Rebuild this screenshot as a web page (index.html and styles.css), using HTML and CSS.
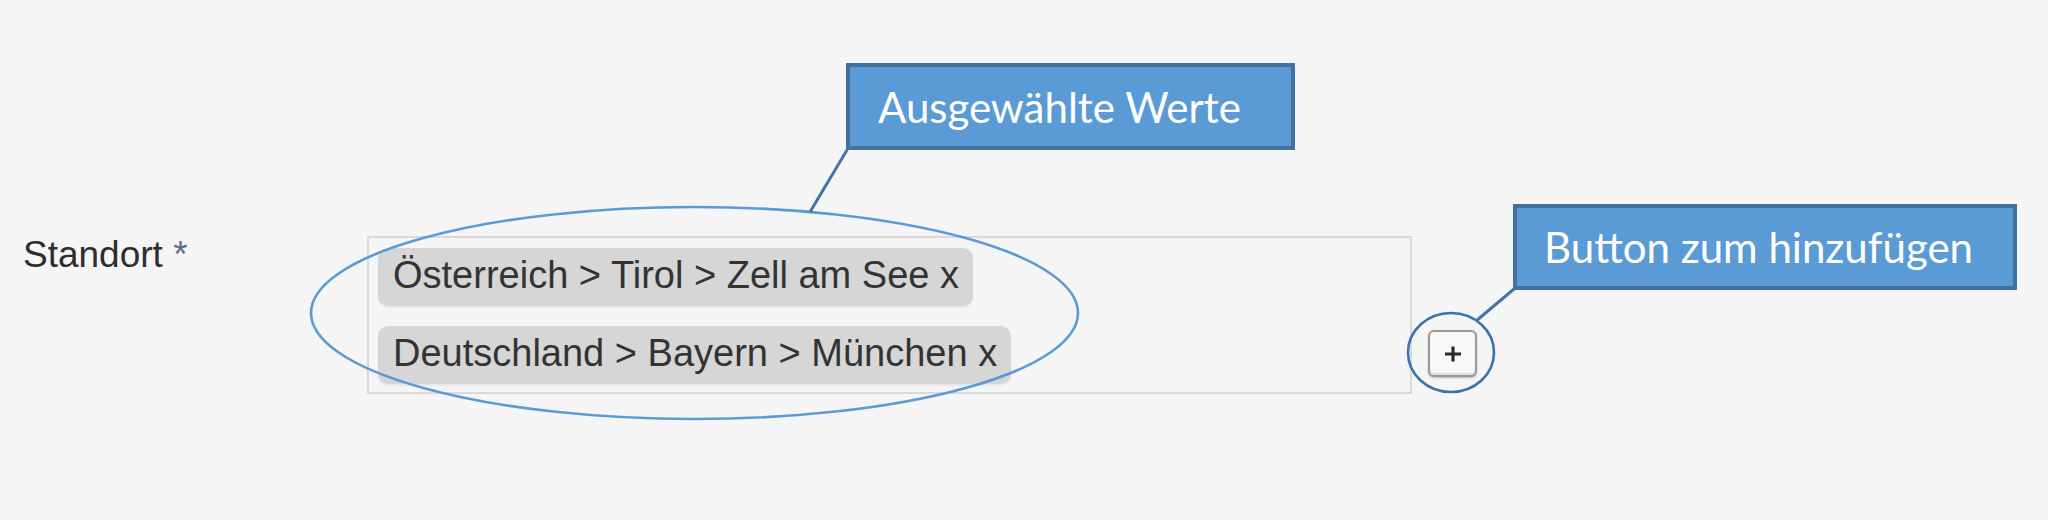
FILE: index.html
```html
<!DOCTYPE html>
<html lang="de">
<head>
<meta charset="utf-8">
<title>Standort</title>
<link rel="stylesheet" href="styles.css">
</head>
<body>
<main class="canvas">
  <div class="form-row">
    <div class="label">Standort <span class="req">*</span></div>
    <div class="multi">
      <span class="chip">Österreich &gt; Tirol &gt; Zell am See x</span>
      <span class="chip">Deutschland &gt; Bayern &gt; München x</span>
    </div>
    <button class="add" type="button" aria-label="hinzufügen">
      <svg viewBox="0 0 22 22" width="22" height="22"><path d="M3 11H19M11 3.5V18.5" stroke="#2b2b2b" stroke-width="3.2" fill="none"/></svg>
    </button>
  </div>

  <svg class="annot" viewBox="0 0 2048 520" width="2048" height="520">
    <ellipse cx="694.5" cy="313" rx="383.5" ry="106" fill="none" stroke="#5b9bd5" stroke-width="2.6"/>
    <ellipse cx="1451" cy="352.5" rx="43" ry="39.5" fill="none" stroke="#3a73b0" stroke-width="2.6"/>
    <line x1="847" y1="150" x2="810" y2="212" stroke="#4274ad" stroke-width="3"/>
    <line x1="1514" y1="289" x2="1476" y2="321" stroke="#4274ad" stroke-width="3"/>
  </svg>

  <div class="callout c1">Ausgewählte Werte</div>
  <div class="callout c2">Button zum hinzufügen</div>
</main>
</body>
</html>
```

FILE: styles.css
```css
html, body {
  margin: 0;
  padding: 0;
  background: #f5f5f5;
}

.canvas {
  position: relative;
  width: 2048px;
  height: 520px;
  overflow: hidden;
  background: #f5f5f5;
}

.form-row {
  display: flex;
  align-items: flex-start;
  padding: 236px 0 0 23px;
  font-family: "Liberation Sans", Arial, sans-serif;
  color: #333333;
}

.label {
  width: 344px;
  font-size: 37px;
  line-height: 1;
  color: #2e2e2e;
}

.req {
  color: #5f7188;
}

.multi {
  box-sizing: border-box;
  width: 1045px;
  height: 158px;
  border: 2px solid #d9d9d9;
  background: #f5f5f5;
  padding: 10px 9px 8px 9px;
  display: flex;
  flex-direction: column;
  align-items: flex-start;
  gap: 20px;
}

.chip {
  box-sizing: border-box;
  height: 58px;
  display: inline-flex;
  align-items: center;
  padding: 0 14px 4px 15px;
  font-size: 38px;
  color: #333333;
  background: #d6d6d6;
  border-radius: 10px;
  box-shadow: 0 2px 2px rgba(0, 0, 0, 0.06);
  white-space: nowrap;
}

.add {
  box-sizing: border-box;
  margin: 94px 0 0 16px;
  width: 49px;
  height: 47px;
  padding: 0;
  border: 2px solid #9b9b9b;
  border-radius: 6px;
  background: #f8f8f8;
  box-shadow: inset 0 -2px 2px rgba(0, 0, 0, 0.12), 0 1px 2px rgba(0, 0, 0, 0.25);
  display: flex;
  align-items: center;
  justify-content: center;
}

.add svg {
  display: block;
}

.annot {
  position: absolute;
  left: 0;
  top: 0;
  pointer-events: none;
}

.callout {
  position: absolute;
  box-sizing: border-box;
  display: flex;
  align-items: center;
  background: #5b9bd5;
  border: 4px solid #41719c;
  color: #ffffff;
  font-family: Lato, "Open Sans", sans-serif;
  font-size: 42px;
  line-height: 1;
  white-space: nowrap;
}

.c1 {
  left: 846px;
  top: 63px;
  width: 449px;
  height: 87px;
  padding-left: 28px;
}

.c2 {
  left: 1513px;
  top: 204px;
  width: 504px;
  height: 86px;
  padding-left: 27px;
}
```
